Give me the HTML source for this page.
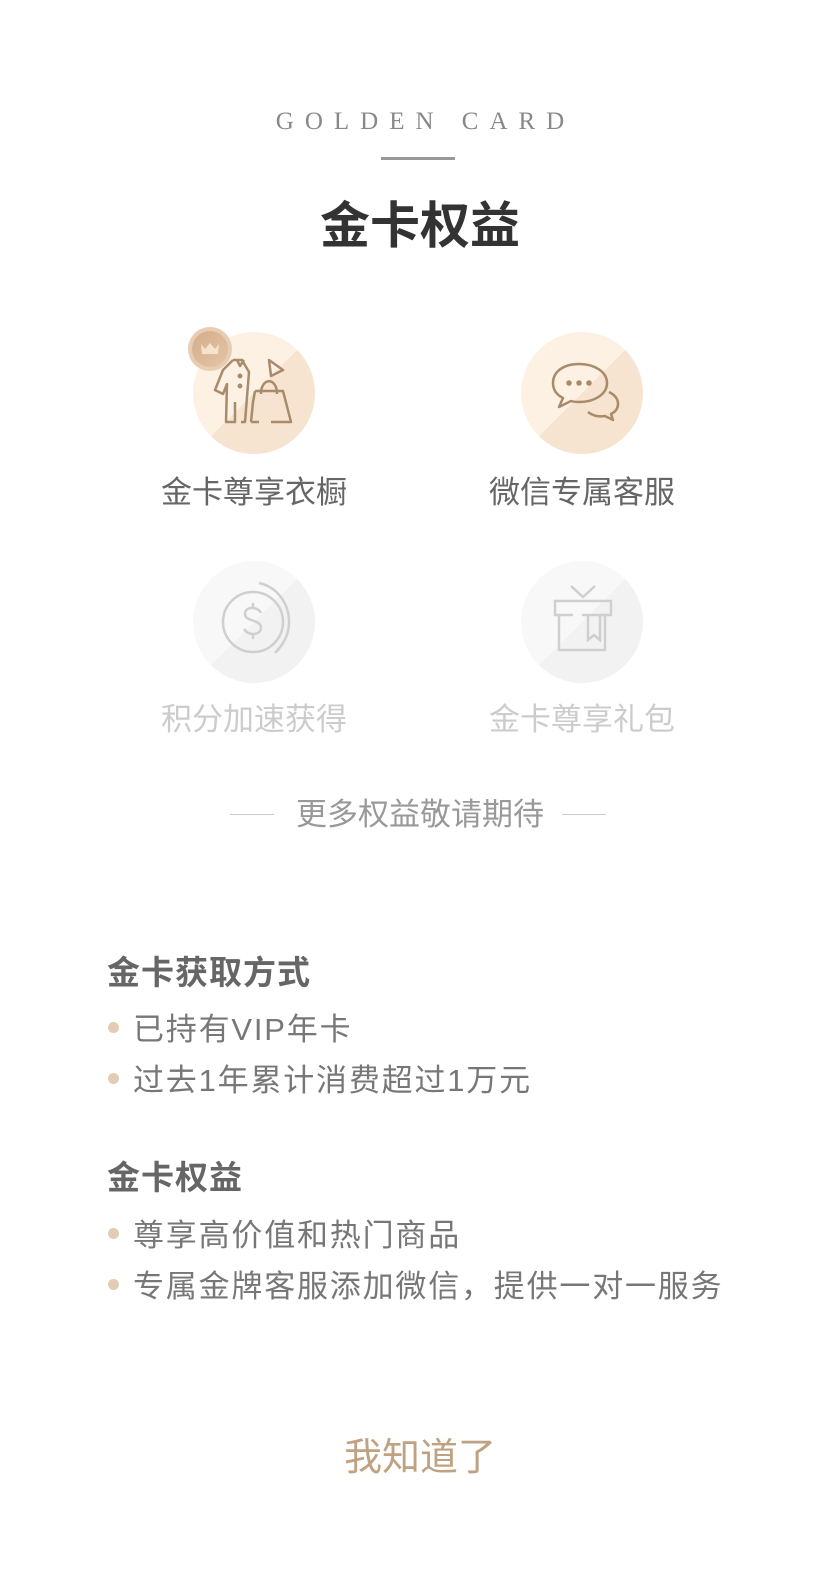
<!DOCTYPE html>
<html><head><meta charset="utf-8"><style>
*{margin:0;padding:0;box-sizing:border-box}
body{width:840px;height:1575px;background:#fff;position:relative;overflow:hidden;font-family:"Liberation Sans","Noto Sans CJK SC",sans-serif}
.a{position:absolute;white-space:nowrap}
.c{left:0;width:840px;text-align:center}
.circ{position:absolute;width:122px;height:122px;border-radius:50%}
.g{background:linear-gradient(135deg,#fdf1e4 50%,#f6e4d0 50%)}
.s{background:linear-gradient(135deg,#f8f8f8 50%,#f2f2f2 50%)}
.circ svg{position:absolute;left:0;top:0}
.lab{font-size:31px;line-height:36px;width:240px;text-align:center}
.h{font-size:33px;font-weight:bold;color:#666;left:107px;line-height:40px;letter-spacing:1px}
.li{font-size:31px;color:#777;left:133px;line-height:36px;letter-spacing:1.8px}
.dot{position:absolute;left:108px;width:11px;height:11px;border-radius:50%;background:#e2ccb3}
</style></head><body>
<div class="a c" style="top:106px;font-family:'Liberation Serif',serif;font-size:25px;letter-spacing:11px;color:#888;padding-left:11px;line-height:32px">GOLDEN CARD</div>
<div class="a" style="left:381px;top:157px;width:74px;height:3px;background:#999"></div>
<div class="a c" style="top:196px;font-size:50px;font-weight:bold;color:#333;line-height:60px">金卡权益</div>

<div class="circ g" style="left:193px;top:332px"><svg width="122" height="122" viewBox="0 0 122 122" fill="none" stroke="#a88b6a" stroke-width="2.5" stroke-linejoin="round">
<path d="M40 28 L30 38 L22 58 L30 62 L34 52 L33 90 L42 90 L42 70 M40 28 L49 28 L56 40 L52 90 L48 90"/>
<path d="M44 28 L47 34 L51 28"/><circle cx="47" cy="44" r="1.2" fill="#a88b6a"/><circle cx="47" cy="54" r="1.2" fill="#a88b6a"/>
<path d="M76 28 L90 38 L78 44 Z"/>
<path d="M62 59 L90 59 L98 90 L78 90 M58 90 L60 70 L62 59 M58 90 L66 90"/><path d="M68 62 C68 45 84 45 84 62"/>
</svg></div>
<div class="a" style="left:188px;top:327px;width:44px;height:44px;border-radius:50%;background:#e9cdb2"></div>
<div class="a" style="left:192px;top:331px;width:36px;height:36px;border-radius:50%;background:linear-gradient(135deg,#d4ad8a,#e4c4a6)"></div>
<svg class="a" style="left:199px;top:340px" width="22" height="18" viewBox="0 0 22 18"><path d="M2 4 L6 9 L11 3 L16 9 L20 4 L19 14 L3 14 Z" fill="#f5e3d0"/></svg>
<div class="a lab" style="left:134px;top:475px;color:#666">金卡尊享衣橱</div>

<div class="circ g" style="left:521px;top:332px"><svg width="122" height="122" viewBox="0 0 122 122" fill="none" stroke="#a88b6a" stroke-width="2.5" stroke-linejoin="round">
<path d="M58 32 C42 32 32 40 32 51 C32 58 36 63 42 66 L38 75 L50 69 C53 70 56 70 58 70 C74 70 86 62 86 51 C86 40 74 32 58 32 Z"/>
<path d="M88 60 C94 63 97 67 97 72 C97 77 94 80 90 82 L92 88 L84 84 C78 85 72 84 67 80"/>
<circle cx="48" cy="51" r="1.5" fill="#a88b6a"/><circle cx="58" cy="51" r="1.5" fill="#a88b6a"/><circle cx="68" cy="51" r="1.5" fill="#a88b6a"/>
</svg></div>
<div class="a lab" style="left:462px;top:475px;color:#666">微信专属客服</div>

<div class="circ s" style="left:193px;top:561px"><svg width="122" height="122" viewBox="0 0 122 122" fill="none" stroke="#cfcfcf" stroke-width="2.5">
<circle cx="60" cy="61" r="30"/><path d="M66 22 C84 26 96 42 96 61 C96 74 90 84 82 92"/>
<path d="M68 52 C66 48 62 47 59 47 C55 47 52 49 52 53 C52 61 68 58 68 67 C68 71 64 73 60 73 C56 73 53 71 51 68 M60 42 L60 47 M60 73 L60 78"/>
</svg></div>
<div class="a lab" style="left:134px;top:702px;color:#ccc">积分加速获得</div>

<div class="circ s" style="left:521px;top:561px"><svg width="122" height="122" viewBox="0 0 122 122" fill="none" stroke="#cfcfcf" stroke-width="2.5">
<path d="M50 25 L62 36 L74 25"/><path d="M34 40 L90 40 L90 54 L84 54 L84 89 L38 89 L38 54 L34 54 Z"/>
<path d="M38 54 L52 54 M61 54 L84 54 M67 54 L67 79 L73 74 L79 79 L79 54"/>
</svg></div>
<div class="a lab" style="left:462px;top:702px;color:#ccc">金卡尊享礼包</div>

<div class="a" style="left:230px;top:814px;width:44px;height:1px;background:#ccc"></div>
<div class="a" style="left:562px;top:814px;width:44px;height:1px;background:#ccc"></div>
<div class="a c" style="top:797px;font-size:31px;color:#999;line-height:36px">更多权益敬请期待</div>

<div class="a h" style="top:953px">金卡获取方式</div>
<div class="dot" style="top:1022px"></div><div class="a li" style="top:1012px">已持有VIP年卡</div>
<div class="dot" style="top:1073px"></div><div class="a li" style="top:1063px">过去1年累计消费超过1万元</div>
<div class="a h" style="top:1158px">金卡权益</div>
<div class="dot" style="top:1228px"></div><div class="a li" style="top:1218px">尊享高价值和热门商品</div>
<div class="dot" style="top:1279px"></div><div class="a li" style="top:1269px">专属金牌客服添加微信，提供一对一服务</div>

<div class="a c" style="top:1435px;font-size:38px;color:#bfa281;line-height:46px">我知道了</div>
</body></html>
